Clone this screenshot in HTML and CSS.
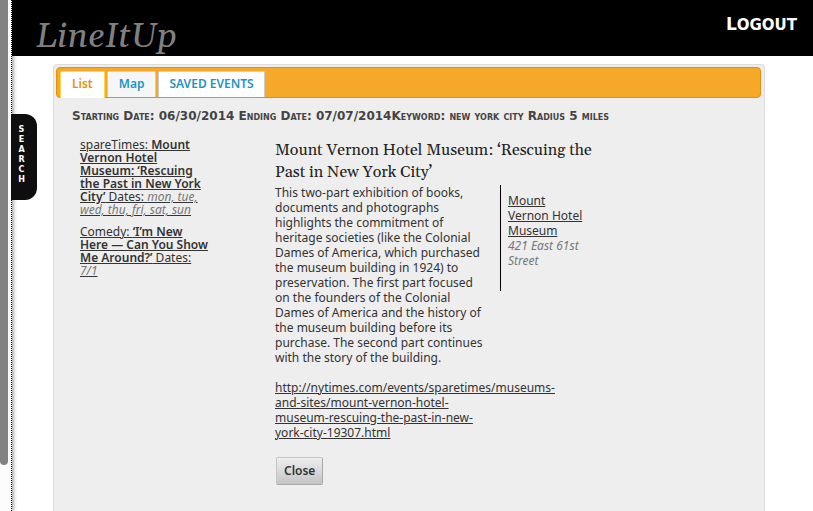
FILE: index.html
```html
<!DOCTYPE html>
<html lang="en">
<head>
<meta charset="utf-8">
<title>LineItUp</title>
<link rel="stylesheet" href="styles.css">
</head>
<body>
<aside class="drawer"><div class="thumb"></div><button class="search-tab" type="button" aria-label="Search">S<br>E<br>A<br>R<br>C<br>H</button></aside>
<div class="page">
  <header class="top">
    <h1 class="brand">LineItUp</h1>
    <a class="logout" href="#">Logout</a>
  </header>
  <main class="panel">
    <nav class="tabs">
      <a class="tab active" href="#">List</a>
      <a class="tab" href="#">Map</a>
      <a class="tab saved" href="#">SAVED EVENTS</a>
    </nav>
    <p class="criteria">Starting Date: 06/30/2014 Ending Date: 07/07/2014Keyword: new york city Radius 5 miles</p>
    <div class="columns">
      <div class="results">
        <a class="result" href="#">spareTimes: <b>Mount<br>Vernon Hotel<br>Museum: ‘Rescuing<br>the Past in New York<br>City’</b> Dates: <i>mon, tue,<br>wed, thu, fri, sat, sun</i></a>
        <a class="result" href="#">Comedy: <b>‘I’m New<br>Here — Can You Show<br>Me Around?’</b> Dates:<br><i>7/1</i></a>
      </div>
      <article class="event">
        <h2 class="title">Mount Vernon Hotel Museum: ‘Rescuing the<br>Past in New York City’</h2>
        <div class="details">
          <div class="description">
            <p class="text">This two-part exhibition of books,<br>documents and photographs<br>highlights the commitment of<br>heritage societies (like the Colonial<br>Dames of America, which purchased<br>the museum building in 1924) to<br>preservation. The first part focused<br>on the founders of the Colonial<br>Dames of America and the history of<br>the museum building before its<br>purchase. The second part continues<br>with the story of the building.</p>
            <a class="source" href="#">http://nytimes.com/events/sparetimes/museums-<br>and-sites/mount-vernon-hotel-<br>museum-rescuing-the-past-in-new-<br>york-city-19307.html</a>
          </div>
          <address class="venue"><a href="#">Mount<br>Vernon Hotel<br>Museum</a><br><i>421 East 61st<br>Street</i></address>
        </div>
        <button class="close" type="button">Close</button>
      </article>
    </div>
  </main>
</div>
</body>
</html>
```
FILE: styles.css
```css
* { box-sizing: border-box; }

body {
  margin: 0;
  min-height: 100vh;
  display: flex;
  overflow: hidden;
  background: #fff;
  color: #333;
  font-family: "Trebuchet MS", "Noto Sans", sans-serif;
  font-size: 12px;
  line-height: 15px;
}

a { color: inherit; }
b { font-weight: 600; }
h1, h2, p { margin: 0; font-weight: 400; }

.drawer {
  position: relative;
  flex: 0 0 12px;
  border-right: 1px dotted #000;
  background: #fcfcfc;
  box-shadow: 1px 0 4px #888;
}

.thumb {
  width: 8px;
  height: 91vh;
  background: #828282;
  border-radius: 0 0 4px 4px;
}

.search-tab {
  position: absolute;
  top: 114px;
  left: 11px;
  width: 26px;
  height: 86px;
  padding: 0 5px 5px 0;
  border: 0;
  border-radius: 0 12px 12px 0;
  background: #0e0e0e;
  color: #fff;
  font: 700 8px/10px "DejaVu Sans", sans-serif;
}

.page { position: relative; flex: 1; min-width: 0; }

.top {
  display: flex;
  justify-content: space-between;
  height: 56px;
  padding: 14px 16px 0 24px;
  background: #000;
}

.brand {
  color: #808080;
  font: italic 35px/46px Gelasio, "Liberation Serif", serif;
}

.logout {
  color: #fff;
  font: 700 15px/20px "DejaVu Sans", sans-serif;
  text-decoration: none;
  text-transform: uppercase;
}

.logout::first-letter { font-size: 17px; }

.panel {
  min-height: calc(100vh - 64px);
  margin: 8px 48px 0 41px;
  padding: 2px;
  border: 1px solid #ddd;
  border-bottom: 0;
  border-radius: 4px 4px 0 0;
  background: #eee;
}

.tabs {
  display: flex;
  gap: 2px;
  height: 31px;
  margin-right: 1px;
  padding: 3px 3px 0;
  border: 1px solid #e78f08;
  border-radius: 4px;
  background: #f6a828;
}

.tab {
  height: 26px;
  padding: 0 11px;
  border: 1px solid #ccc;
  border-bottom: 0;
  border-radius: 2px 2px 0 0;
  background: #f6f6f6;
  color: #1c94c4;
  font-weight: 600;
  line-height: 24px;
  text-decoration: none;
}

.active {
  height: 27px;
  border-color: #fbd850;
  background: #fff;
  color: #eb8f00;
}

.saved {
  padding: 0 10px;
  background: #fff;
}

.criteria {
  padding: 10px 16px 0;
  color: #444;
  font: 700 12px/16px "DejaVu Sans", sans-serif;
  font-variant: small-caps;
}

.columns {
  display: grid;
  grid-template-columns: 195px 1fr;
  padding: 14px 24px 0;
}

.results { line-height: 13px; }
.result { display: block; margin-bottom: 9px; }
.results i, .venue i { color: #777; }

.title {
  padding-top: 1px;
  color: #222;
  font: 16px/22px Gelasio, "Liberation Serif", serif;
}

.details {
  display: grid;
  grid-template-columns: 225px 1fr;
  align-items: start;
  padding-top: 2px;
}

.description { white-space: nowrap; }
.text { margin-bottom: 15px; }

.venue {
  min-height: 106px;
  padding: 8px 7px;
  border-left: 1px solid #000;
  font-style: normal;
}

.close {
  margin: 17px 0 0 1px;
  padding: 5px 7px;
  border: 1px solid #aaa;
  border-radius: 2px;
  border-color: #c4c4c4 #aaa #aaa #c4c4c4;
  background: linear-gradient(#eee, #c4c4c4);
  color: #333;
  font: inherit;
  font-weight: 600;
  line-height: 16px;
}
```
